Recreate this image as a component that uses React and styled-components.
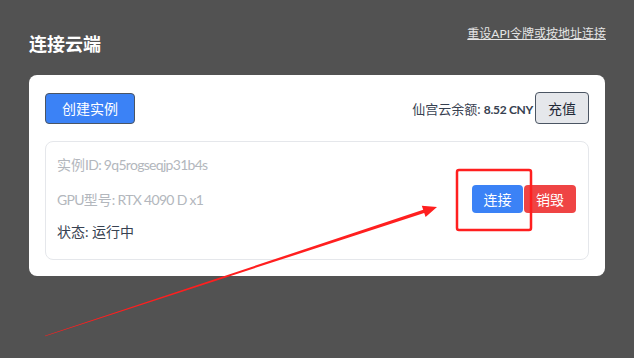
import React from "react"
import styled, { createGlobalStyle } from "styled-components"

const GlobalStyle = createGlobalStyle`
  html, body {
    margin: 0;
    padding: 0;
    background: #525252;
  }
  body {
    font-family: Lato, "Noto Sans CJK SC", sans-serif;
  }
`

const Page = styled.div`
  position: relative;
  width: 634px;
  height: 358px;
  box-sizing: border-box;
  padding: 26px 28px 0 29px;
  overflow: hidden;
`

const Header = styled.div`
  display: flex;
  justify-content: space-between;
  align-items: flex-start;
  height: 49px;
`

const Title = styled.h2`
  margin: 8px 0 0;
  font-size: 18px;
  line-height: 20px;
  font-weight: bold;
  color: #ffffff;
`

const ResetLink = styled.a`
  font-size: 12px;
  line-height: 16px;
  color: #e5e5e5;
  text-decoration: underline;
  cursor: pointer;
`

const Card = styled.div`
  width: 576px;
  box-sizing: border-box;
  background: #ffffff;
  border-radius: 8px;
  padding: 17px 16px 16px;
`

const TopRow = styled.div`
  display: flex;
  align-items: center;
  justify-content: space-between;
  margin-bottom: 17px;
`

const Button = styled.button`
  font-family: Lato, "Noto Sans CJK SC", sans-serif;
  font-size: 14px;
  color: ${({ $light }) => ($light ? "#1f2937" : "#ffffff")};
  background: ${({ $bg }) => $bg};
  border: ${({ $bordered }) => ($bordered ? "1px solid #4b5563" : "none")};
  border-radius: 4px;
  width: ${({ $w }) => $w}px;
  height: ${({ $h }) => $h}px;
  padding: 0;
  cursor: pointer;
`

const Balance = styled.div`
  display: flex;
  align-items: center;
  gap: 2px;
`

const BalanceText = styled.span`
  font-size: 13px;
  color: #374151;
`

const Amount = styled.span`
  font-weight: bold;
  font-size: 12px;
  letter-spacing: -0.3px;
`

const Instance = styled.div`
  display: flex;
  align-items: center;
  justify-content: space-between;
  border: 1px solid #e5e7eb;
  border-radius: 8px;
  padding: 13px 12px 17px 11px;
`

const Info = styled.div`
  display: flex;
  flex-direction: column;
`

const Line = styled.div`
  font-size: 14px;
  line-height: 20px;
  color: ${({ $dim }) => ($dim ? "#b3b7bd" : "#374151")};
  margin-bottom: ${({ $mb }) => $mb || 0}px;
`

const Latin = styled.span`
  letter-spacing: -0.7px;
`

const Actions = styled.div`
  display: flex;
  gap: 1px;
`

const Overlay = styled.svg`
  position: absolute;
  left: 0;
  top: 0;
  pointer-events: none;
`

export default function App() {
  return (
    <Page>
      <GlobalStyle />
      <Header>
        <Title>连接云端</Title>
        <ResetLink>重设API令牌或按地址连接</ResetLink>
      </Header>
      <Card>
        <TopRow>
          <Button $bg="#3b82f6" $bordered $w={90} $h={31}>
            创建实例
          </Button>
          <Balance>
            <BalanceText>
              仙宫云余额: <Amount>8.52 CNY</Amount>
            </BalanceText>
            <Button $bg="#e5e7eb" $bordered $light $w={54} $h={32}>
              充值
            </Button>
          </Balance>
        </TopRow>
        <Instance>
          <Info>
            <Line $dim $mb={15}>
              实例<Latin>ID: 9q5rogseqjp31b4s</Latin>
            </Line>
            <Line $dim $mb={12}>
              <Latin>GPU</Latin>型号<Latin>: RTX 4090 D x1</Latin>
            </Line>
            <Line>状态: 运行中</Line>
          </Info>
          <Actions>
            <Button $bg="#3b82f6" $w={51} $h={28}>
              连接
            </Button>
            <Button $bg="#ef4444" $w={52} $h={28}>
              销毁
            </Button>
          </Actions>
        </Instance>
      </Card>
      <Overlay width="634" height="358" viewBox="0 0 634 358">
        <rect
          x="457"
          y="170"
          width="74"
          height="60"
          rx="2"
          fill="none"
          stroke="#ff1f1f"
          strokeWidth="2.5"
        />
        <polygon
          fill="#ff1f1f"
          points="45.1,336.2 424.2,213.1 425.6,217.1 437,207 421.8,205.7 423.2,209.7 44.9,335.8"
        />
      </Overlay>
    </Page>
  )
}
